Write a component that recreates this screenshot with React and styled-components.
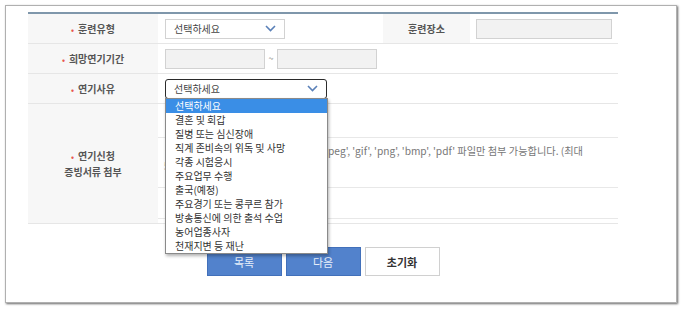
import React from "react";
import styled, { createGlobalStyle } from "styled-components";

const GlobalStyle = createGlobalStyle`
  html, body {
    margin: 0;
    background: #ffffff;
  }
  body {
    font-family: "Noto Sans CJK KR", "Noto Sans", sans-serif;
    color: #444;
  }
`;

// Frame (captured window)
const Frame = styled.div`
  position: relative;
  box-sizing: border-box;
  margin: 5px;
  width: 672px;
  height: 298px;
  background: #fff;
  border: 1px solid #b0b0b0;
  box-shadow: 1px 1px 2px rgba(0, 0, 0, 0.6);
  padding: 6px 58px 0 22px;
`;

// Form table
const FormTable = styled.div`
  border-top: 2px solid #7f97ab;
`;

const Row = styled.div`
  display: grid;
  grid-template-columns: ${({ $cols }) => $cols || "130px 1fr"};
  min-height: ${({ $h }) => $h || 29}px;
  border-bottom: 1px solid #e6e6e6;
`;

const Label = styled.div`
  display: flex;
  flex-direction: column;
  align-items: center;
  justify-content: center;
  background: #f7f7f7;
  font-size: 10px;
  font-weight: 700;
  color: #555;
  line-height: 15px;
  text-align: center;
`;

const Req = styled.span`
  color: #e8554e;
  font-size: 8px;
  margin-right: 4px;
`;

const Cell = styled.div`
  display: flex;
  align-items: center;
  padding: ${({ $pad }) => $pad || "0 7px"};
  position: relative;
`;

const Field = styled.div`
  box-sizing: border-box;
  width: ${({ $w }) => $w}px;
  height: 20px;
  background: #f2f2f2;
  border: 1px solid #d2d2d2;
`;

const Tilde = styled.span`
  width: 12px;
  text-align: center;
  font-size: 9px;
  color: #777;
`;

const SelectBox = styled.div`
  position: relative;
  box-sizing: border-box;
  width: ${({ $w }) => $w}px;
  height: 20px;
  display: flex;
  align-items: center;
  justify-content: space-between;
  padding: 0 8px 0 8px;
  background: #fff;
  border: ${({ $focus }) => ($focus ? "1.5px solid #2b2b2b" : "1px solid #d2d2d2")};
  border-radius: ${({ $focus }) => ($focus ? "3px" : "0")};
  font-size: 10px;
  color: #444;
`;

const Dropdown = styled.ul`
  position: absolute;
  z-index: 5;
  top: 18px;
  left: -1px;
  box-sizing: border-box;
  width: 163px;
  margin: 0;
  padding: 0;
  list-style: none;
  background: #fff;
  border: 1px solid #8a8a8a;
  box-shadow: 1px 2px 3px rgba(0, 0, 0, 0.3);
`;

const Option = styled.li`
  height: 14px;
  line-height: 14px;
  padding: 0 9px;
  font-size: 10px;
  white-space: nowrap;
  color: ${({ $active }) => ($active ? "#fff" : "#333")};
  background: ${({ $active }) => ($active ? "#3a8ee6" : "transparent")};
`;

const SubTable = styled.div`
  flex: 1;
  display: flex;
  flex-direction: column;
`;

const SubRow = styled.div`
  height: ${({ $h }) => $h}px;
  box-sizing: border-box;
  border-bottom: 1px solid #e8e8e8;
  padding: 5px 6px 0 6px;
`;

const Note = styled.p`
  margin: 0;
  font-size: 10.2px;
  line-height: 15px;
  color: #777;
  word-break: keep-all;
`;

const Buttons = styled.div`
  display: flex;
  justify-content: center;
  gap: 4px;
  margin-top: 23px;
`;

const Btn = styled.button`
  box-sizing: border-box;
  width: 75px;
  height: 29px;
  font-family: inherit;
  font-size: 11px;
  font-weight: ${({ $primary }) => ($primary ? 400 : 700)};
  color: ${({ $primary }) => ($primary ? "#e6eefa" : "#333")};
  background: ${({ $primary }) => ($primary ? "#5282cc" : "#fff")};
  border: 1px solid ${({ $primary }) => ($primary ? "#4270ba" : "#d0d0d0")};
  padding: 0;
`;

const Chevron = () => (
  <svg width="11" height="7" viewBox="0 0 11 7">
    <polyline points="1,1 5.5,5.5 10,1" fill="none" stroke="#5a80b8" strokeWidth="1.6" />
  </svg>
);

const reasons = [
  "선택하세요",
  "결혼 및 회갑",
  "질병 또는 심신장애",
  "직계 존비속의 위독 및 사망",
  "각종 시험응시",
  "주요업무 수행",
  "출국(예정)",
  "주요경기 또는 콩쿠르 참가",
  "방송통신에 의한 출석 수업",
  "농어업종사자",
  "천재지변 등 재난",
];

export default function App() {
  return (
    <>
      <GlobalStyle />
      <Frame>
        <FormTable>
          <Row $cols="130px 225px 87px 1fr">
            <Label>
              <span>
                <Req>•</Req>훈련유형
              </span>
            </Label>
            <Cell>
              <SelectBox $w={120}>
                선택하세요
                <Chevron />
              </SelectBox>
            </Cell>
            <Label>훈련장소</Label>
            <Cell $pad="0 6px">
              <Field $w={136} />
            </Cell>
          </Row>
          <Row>
            <Label>
              <span>
                <Req>•</Req>희망연기기간
              </span>
            </Label>
            <Cell>
              <Field $w={100} />
              <Tilde>~</Tilde>
              <Field $w={100} />
            </Cell>
          </Row>
          <Row>
            <Label>
              <span>
                <Req>•</Req>연기사유
              </span>
            </Label>
            <Cell>
              <SelectBox $w={162} $focus>
                선택하세요
                <Chevron />
                <Dropdown>
                  {reasons.map((r, i) => (
                    <Option key={r} $active={i === 0}>
                      {r}
                    </Option>
                  ))}
                </Dropdown>
              </SelectBox>
            </Cell>
          </Row>
          <Row $h={119}>
            <Label>
              <span>
                <Req>•</Req>연기신청
              </span>
              <span>증빙서류 첨부</span>
            </Label>
            <Cell $pad="4px 0 4px 0">
              <SubTable>
                <SubRow $h={30} />
                <SubRow $h={50}>
                  <Note>
                    ※ 연기 증빙서류의 첨부 파일은 'jpg', 'jpeg', 'gif', 'png', 'bmp', 'pdf' 파일만 첨부 가능합니다. (최대 5MB까지)
                  </Note>
                </SubRow>
                <SubRow $h={31} />
              </SubTable>
            </Cell>
          </Row>
        </FormTable>
        <Buttons>
          <Btn $primary>목록</Btn>
          <Btn $primary>다음</Btn>
          <Btn>초기화</Btn>
        </Buttons>
      </Frame>
    </>
  );
}
